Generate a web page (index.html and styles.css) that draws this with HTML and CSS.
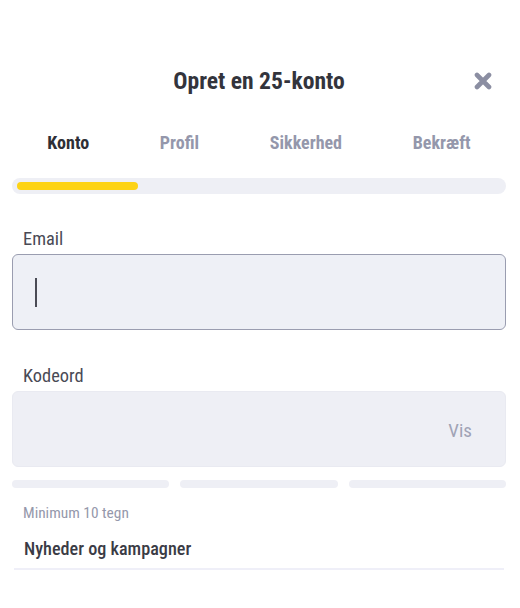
FILE: index.html
```html
<!DOCTYPE html>
<html lang="da">
<head>
<meta charset="utf-8">
<title>Opret en 25-konto</title>
<link rel="stylesheet" href="styles.css">
</head>
<body>
<div class="sheet">
  <header class="head">
    <h1 class="title">Opret en 25-konto</h1>
    <button class="close" aria-label="Luk">
      <svg width="18" height="18" viewBox="0 0 18 18"><path d="M3 3 L15 15 M15 3 L3 15" stroke="#8b8ea2" stroke-width="4.6" stroke-linecap="round"/></svg>
    </button>
  </header>
  <nav class="tabs">
    <span class="tab active">Konto</span>
    <span class="tab">Profil</span>
    <span class="tab">Sikkerhed</span>
    <span class="tab">Bekræft</span>
  </nav>
  <div class="track"><div class="fill"></div></div>

  <label class="label email-label">Email</label>
  <div class="field focused"><span class="caret"></span></div>

  <label class="label pw-label">Kodeord</label>
  <div class="field pw"><span class="show">Vis</span></div>
  <div class="strength"><span></span><span></span><span></span></div>
  <p class="hint">Minimum 10 tegn</p>
  <div class="news">Nyheder og kampagner</div>
</div>
</body>
</html>
```
FILE: styles.css
```css
* { box-sizing: border-box; }
html, body { margin: 0; padding: 0; background: #fff; }
body {
  font-family: "Roboto", "Liberation Sans", sans-serif;
  font-stretch: condensed;
  color: #3b3c46;
}
.sheet { padding: 0 14px 0 12px; width: 520px; }
.head {
  height: 64px;
  margin-top: 63px;
  display: flex;
  align-items: center;
  justify-content: center;
  position: relative;
}
.title {
  margin: 0;
  font-size: 23.6px;
  font-weight: 700;
  color: #33343c;
  line-height: 1;
  margin-top: -26px;
}
.close {
  position: absolute;
  right: 13px;
  top: 8px;
  border: 0;
  background: none;
  padding: 0;
  width: 20px;
  height: 20px;
  display: flex;
  align-items: center;
  justify-content: center;
}
.tabs {
  display: flex;
  justify-content: space-around;
  margin-top: 0;
  height: 30px;
  align-items: center;
}
.tab {
  font-size: 18px;
  font-weight: 700;
  color: #9497ab;
}
.tab.active { color: #2e2f36; }
.track {
  margin-top: 21px;
  height: 16px;
  border-radius: 8px;
  background: #eeeff5;
  padding: 4px 5px;
}
.fill {
  width: 121px;
  height: 8px;
  border-radius: 4px;
  background: #fdd315;
}
.label {
  display: block;
  font-size: 18.4px;
  color: #494a55;
  padding-left: 11px;
  line-height: 20px;
}
.email-label { margin-top: 35px; }
.field {
  margin-top: 5px;
  height: 76px;
  border-radius: 6px;
  background: #eeeff5;
  display: flex;
  align-items: center;
}
.field.focused {
  border: 1px solid #9a9db0;
  background: #eef0f6;
  padding-left: 22px;
}
.caret {
  width: 2px;
  height: 29px;
  background: #4a4b55;
  margin-top: 1px;
}
.pw-label { margin-top: 36px; }
.field.pw {
  justify-content: flex-end;
  padding-right: 33px;
  border: 1px solid #e9eaf1;
}
.show {
  font-size: 19px;
  color: #a0a3b5;
  margin-top: 2px;
}
.strength {
  display: grid;
  grid-template-columns: 1fr 1fr 1fr;
  gap: 11px;
  margin-top: 13px;
}
.strength span {
  height: 8px;
  border-radius: 4px;
  background: #eeeff5;
}
.hint {
  margin: 17px 0 0;
  padding-left: 11px;
  font-size: 15.4px;
  color: #9598ab;
  line-height: 16px;
}
.news {
  margin-top: 18px;
  padding: 0 0 9px 10px;
  font-size: 18.2px;
  font-weight: 500;
  color: #3a3b45;
  line-height: 20px;
  border-bottom: 2px solid #efeff8;
  margin-left: 2px;
  margin-right: 2px;
}
```
